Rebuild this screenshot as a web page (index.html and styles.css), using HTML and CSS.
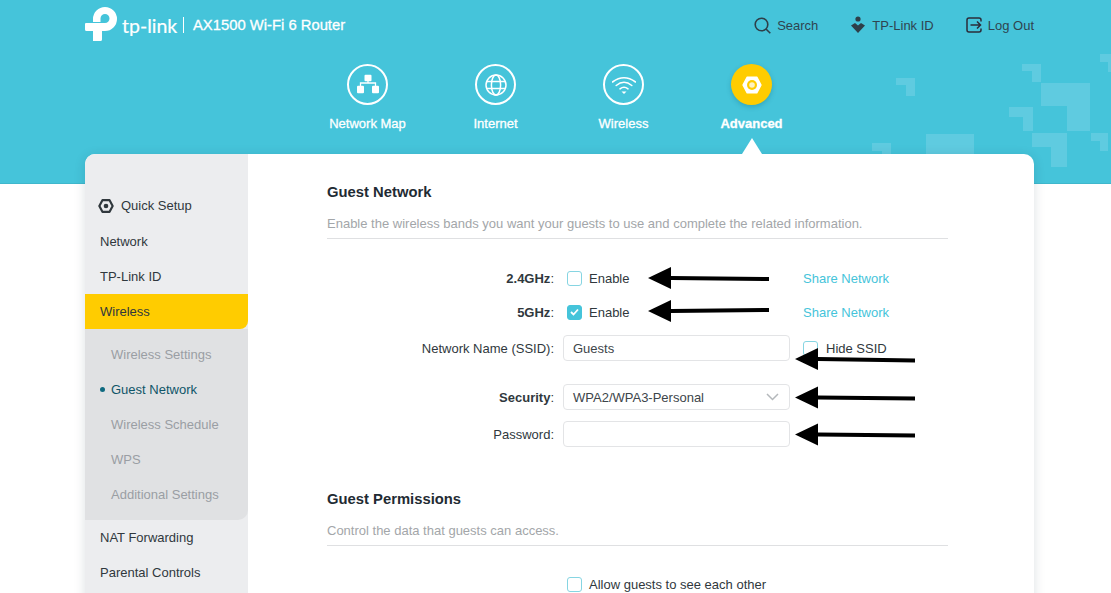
FILE: index.html
```html
<!DOCTYPE html>
<html lang="en">
<head>
  <meta charset="UTF-8" />
  <meta name="viewport" content="width=device-width, initial-scale=1.0"/>
  <title>AX1500 Wi-Fi 6 Router</title>
  <link rel="stylesheet" href="styles.css">
</head>
<body>
  <div class="page">
    <header class="hero">
      <svg class="hero-pattern" width="300" height="184" viewBox="811 0 300 184">
        <path d="M896 78h19v18h-9v-11h-10z"/>
        <path d="M1022 64h19v18h-9v-11h-10z"/>
        <path d="M1041 83h49v48h-23v-25h-26z"/>
        <path d="M1009 107h24v24h-10v-14h-14z"/>
        <path d="M1032 133h35v34h-16v-20h-19z"/>
        <path d="M1091 133h17v18h-8v-10h-9z"/>
        <path d="M1100 54h11v18h-3v-10h-8z"/>
        <path d="M926 134h48v50h-48z"/>
        <path d="M872 143h19v41h-9v-33h-10z"/>
      </svg>

      <div class="topbar">
        <svg class="logo-mark" width="33" height="36" viewBox="0 0 33 36">
          <path d="M8 16V13A12 12 0 1 1 20 25H17V17H20A4.500 4.500 0 1 0 15.500 12.500V16z"/>
          <path d="M1 17H17V33.500a1.500 1.500 0 0 1-1.500 1.500H8V25H1.500A1.500 1.500 0 0 1 0 23.500V18a1 1 0 0 1 1-1z"/>
        </svg>
        <span class="logo-text">tp-link</span>
        <span class="logo-sep"></span>
        <span class="model">AX1500 Wi-Fi 6 Router</span>
        <nav class="top-links">
          <a class="top-link">
            <svg width="17" height="17" viewBox="0 0 17 17" fill="none" stroke="#2e3f49" stroke-width="1.600"><circle cx="7.500" cy="7.500" r="6.300"/><path d="M12 12l4.300 4.300"/></svg>
            Search
          </a>
          <a class="top-link">
            <svg width="16" height="18" viewBox="0 0 16 18" fill="#2e3f49"><circle cx="8" cy="3" r="2.600"/><path d="M1 9.500L5 7l3 2.500L11 7l4 2.500L8 17z"/></svg>
            TP-Link ID
          </a>
          <a class="top-link">
            <svg width="16" height="16" viewBox="0 0 16 16" fill="none" stroke="#2b2c3a" stroke-width="1.500"><path d="M15 4.500V3a2 2 0 0 0-2-2H3A2 2 0 0 0 1 3v10a2 2 0 0 0 2 2h10a2 2 0 0 0 2-2v-1.500"/><path d="M4.500 8h10M11 4.500L14.500 8 11 11.500"/></svg>
            Log Out
          </a>
        </nav>
      </div>

      <nav class="main-nav">
        <a class="nav-item">
          <span class="nav-circle">
            <svg width="24" height="24" viewBox="-12 -12 24 24" fill="#fff"><rect x="-3.500" y="-10.300" width="7" height="6.600" rx="1"/><rect x="-11" y="0.700" width="7" height="7.600" rx="1"/><rect x="4" y="0.700" width="7" height="7.600" rx="1"/><path d="M0-4v2.500M-7.500 1v-3h15v3" fill="none" stroke="#fff" stroke-width="1.300"/></svg>
          </span>
          Network Map
        </a>
        <a class="nav-item">
          <span class="nav-circle">
            <svg width="24" height="24" viewBox="-12 -12 24 24" fill="none" stroke="#fff" stroke-width="1.500"><circle r="10"/><ellipse rx="4.600" ry="10"/><path d="M-9-3.400H9M-9 3.400H9"/></svg>
          </span>
          Internet
        </a>
        <a class="nav-item">
          <span class="nav-circle">
            <svg width="24" height="24" viewBox="-12 -12 24 24" fill="none" stroke="#fff" stroke-width="1.600" stroke-linecap="round"><path d="M-11.500-3Q0-11.500 11.500-3"/><path d="M-7.800 0.500Q0-6 7.800 0.500"/><path d="M-4 3.800Q0 0.800 4 3.800"/><path d="M-2.500 6.500H2.500L0 9z" fill="#fff" stroke="none"/></svg>
          </span>
          Wireless
        </a>
        <a class="nav-item is-active">
          <span class="nav-circle">
            <svg width="24" height="24" viewBox="-12 -12 24 24" fill="#fff"><path d="M-9 0L-4.800-7.800H4.800L9 0 4.800 7.800H-4.800z" stroke="#fff" stroke-width="1.400" stroke-linejoin="round"/><circle r="5" fill="#ffcc00"/><circle r="2.800" fill="#fff3c0"/></svg>
          </span>
          Advanced
        </a>
      </nav>
    </header>

    <div class="card">
      <span class="card-caret"></span>
      <aside class="sidebar">
        <a class="side-item">
          <svg class="side-icon" width="20" height="20" viewBox="-12 -12 24 24" fill="#30383d"><path d="M-8 0L-4.300-7H4.300L8 0 4.300 7H-4.300z" fill="none" stroke="#30383d" stroke-width="2.600" stroke-linejoin="round"/><circle r="2.800"/></svg>
          Quick Setup
        </a>
        <a class="side-item">Network</a>
        <a class="side-item">TP-Link ID</a>
        <a class="side-item is-open">Wireless</a>
        <div class="side-sub">
          <a class="sub-item">Wireless Settings</a>
          <a class="sub-item is-current">Guest Network</a>
          <a class="sub-item">Wireless Schedule</a>
          <a class="sub-item">WPS</a>
          <a class="sub-item">Additional Settings</a>
        </div>
        <a class="side-item">NAT Forwarding</a>
        <a class="side-item">Parental Controls</a>
      </aside>

      <main class="content">
        <section class="section">
          <h2 class="section-title">Guest Network</h2>
          <p class="section-desc">Enable the wireless bands you want your guests to use and complete the related information.</p>

          <div class="form-row gap-8">
            <span class="form-label is-bold">2.4GHz<i>:</i></span>
            <label class="form-check"><span class="check"></span>Enable</label>
            <a class="share-link">Share Network</a>
          </div>
          <div class="form-row gap-10">
            <span class="form-label is-bold">5GHz<i>:</i></span>
            <label class="form-check"><span class="check is-on"><svg width="9" height="8" viewBox="0 0 9 8" fill="none" stroke="#fff" stroke-width="1.800"><path d="M1 4l2.500 2.500L8 1.500"/></svg></span>Enable</label>
            <a class="share-link">Share Network</a>
          </div>
          <div class="form-row gap-23">
            <span class="form-label">Network Name (SSID):</span>
            <div class="field">Guests</div>
            <label class="side-check"><span class="check"></span>Hide SSID</label>
          </div>
          <div class="form-row gap-11">
            <span class="form-label is-bold">Security<i>:</i></span>
            <div class="field">
              WPA2/WPA3-Personal
              <svg width="13" height="8" viewBox="0 0 13 8" fill="none" stroke="#b4b8bb" stroke-width="1.500"><path d="M1 1l5.500 5.500L12 1"/></svg>
            </div>
          </div>
          <div class="form-row">
            <span class="form-label">Password:</span>
            <div class="field"></div>
          </div>
        </section>

        <section class="section section-next">
          <h2 class="section-title">Guest Permissions</h2>
          <p class="section-desc is-tight">Control the data that guests can access.</p>
          <div class="form-row">
            <span class="form-label"></span>
            <label class="form-check"><span class="check"></span>Allow guests to see each other</label>
          </div>
        </section>
      </main>
    </div>

    <svg class="arrows" width="1111" height="593" viewBox="0 0 1111 593">
      <path d="M648 278l23-11v9l98 1v4l-98-1v9z"/>
      <path d="M648 311l23-11v9l98-1v4l-98 1v9z"/>
      <path d="M795 359l23-11v9l97 1.500v4l-97-1.500v9z"/>
      <path d="M795 397.500l23-11v9l97 1v4l-97-1v9z"/>
      <path d="M795 434.500l23-11v9l97 1v4l-97-1v9z"/>
    </svg>
  </div>
</body>
</html>
```

FILE: styles.css
```css
html, body {
  margin: 0;
  background: #fff;
}
.page {
  position: relative;
  width: 1111px;
  height: 593px;
  overflow: hidden;
  font-family: "Liberation Sans", Arial, sans-serif;
  font-size: 13px;
  color: #30383d;
}
.hero {
  position: relative;
  height: 184px;
  box-sizing: border-box;
  padding: 0 77px 0 85px;
  background: #45c4da;
  border-bottom: 1px solid #3fb7cc;
  color: #fff;
}
.hero-pattern {
  position: absolute;
  top: 0;
  right: 0;
  fill: #5fcbe0;
}
.topbar {
  position: relative;
  display: flex;
  align-items: center;
  height: 50px;
}
.logo-mark {
  fill: #fff;
  margin: -2px 4px 0 0;
}
.logo-text {
  width: 61px;
  font-family: Lato, sans-serif;
  font-size: 19.500px;
  -webkit-text-stroke: 0.2px #fff;
}
.logo-sep {
  width: 1px;
  height: 16px;
  margin-right: 9px;
  background: #fff;
}
.model {
  font-size: 14.800px;
  -webkit-text-stroke: 0.3px #fff;
}
.top-links {
  display: flex;
  margin-left: auto;
  gap: 32px;
}
.top-link {
  display: flex;
  align-items: center;
  gap: 6px;
  font-size: 13px;
  color: #2f4450;
}
.main-nav {
  position: relative;
  display: flex;
  margin: 14px 0 0 218.500px;
}
.nav-item {
  display: flex;
  flex-direction: column;
  align-items: center;
  width: 128px;
  font-size: 13px;
  -webkit-text-stroke: 0.3px #fff;
}
.nav-circle {
  display: flex;
  align-items: center;
  justify-content: center;
  box-sizing: border-box;
  width: 41px;
  height: 41px;
  margin-bottom: 11px;
  border: 2px solid #fff;
  border-radius: 50%;
}
.nav-item.is-active {
  font-weight: 700;
}
.is-active .nav-circle {
  background: #ffcc00;
  border: none;
  box-shadow: 0 2px 5px rgba(0, 80, 100, 0.25);
}

.card {
  position: relative;
  display: flex;
  width: 949px;
  height: 520px;
  margin: -30px 0 0 85px;
  background: #fff;
  border-radius: 10px;
  box-shadow: 0 2px 12px rgba(0, 40, 60, 0.14);
}
.card-caret {
  position: absolute;
  top: -16px;
  left: 657px;
  border-left: 10px solid transparent;
  border-right: 10px solid transparent;
  border-bottom: 16px solid #fff;
}
.sidebar {
  box-sizing: border-box;
  width: 163px;
  padding-top: 34.400px;
  background: #ecedef;
  border-radius: 10px 0 0 10px;
}
.side-item {
  display: flex;
  align-items: center;
  height: 35.200px;
  padding-left: 15px;
}
.side-icon {
  margin: 0 5px 0 -4px;
}
.side-item.is-open {
  background: #ffcc00;
  border-radius: 0 0 8px 0;
}
.side-sub {
  padding: 7.400px 0;
  background: #e0e1e3;
  border-radius: 0 0 10px 0;
}
.sub-item {
  position: relative;
  display: flex;
  align-items: center;
  height: 35.200px;
  padding-left: 26px;
  color: #9a9ea3;
}
.sub-item.is-current {
  color: #0f5568;
}
.sub-item.is-current::before {
  content: "";
  position: absolute;
  left: 15px;
  top: 15px;
  width: 5px;
  height: 5px;
  border-radius: 50%;
  background: #0f6a80;
}

.content {
  width: 621px;
  padding: 28px 0 0 79px;
}
.section-title {
  margin: 0 0 13px;
  font-size: 14.800px;
  line-height: 20px;
  color: #1f2b33;
}
.section-desc {
  margin: 0 0 26px;
  padding-bottom: 5px;
  border-bottom: 1px solid #dfe0e2;
  font-size: 13px;
  line-height: 18px;
  color: #a3a6a9;
}
.section-desc.is-tight {
  margin-bottom: 25px;
}
.section-next {
  margin-top: 42px;
}
.form-row {
  display: flex;
  align-items: center;
  height: 26px;
}
.gap-8 { margin-bottom: 8px; }
.gap-10 { margin-bottom: 10px; }
.gap-11 { margin-bottom: 11px; }
.gap-23 { margin-bottom: 23px; }
.form-label {
  flex: none;
  width: 227px;
  margin-right: 9px;
  text-align: right;
  white-space: nowrap;
}
.form-label.is-bold {
  font-weight: 700;
}
.form-label i {
  font-style: normal;
  font-weight: 400;
}
.form-check {
  display: flex;
  align-items: center;
  width: 223px;
  padding-left: 4px;
  white-space: nowrap;
}
.check {
  display: flex;
  align-items: center;
  justify-content: center;
  flex: none;
  box-sizing: border-box;
  width: 15px;
  height: 15px;
  margin-right: 7px;
  border: 1px solid #86d5e2;
  border-radius: 3px;
  background: #fff;
}
.check.is-on {
  background: #45c4da;
  border-color: #45c4da;
}
.share-link {
  margin-left: 13px;
  color: #45c4da;
}
.field {
  display: flex;
  align-items: center;
  justify-content: space-between;
  box-sizing: border-box;
  width: 227px;
  height: 26px;
  padding: 0 10px 0 9px;
  border: 1px solid #e3e4e6;
  border-radius: 4px;
  color: #3d454a;
}
.side-check {
  display: flex;
  align-items: center;
  margin-left: 13px;
}
.side-check .check {
  margin-right: 8px;
}
.arrows {
  position: absolute;
  top: 0;
  left: 0;
  fill: #000;
}
```
